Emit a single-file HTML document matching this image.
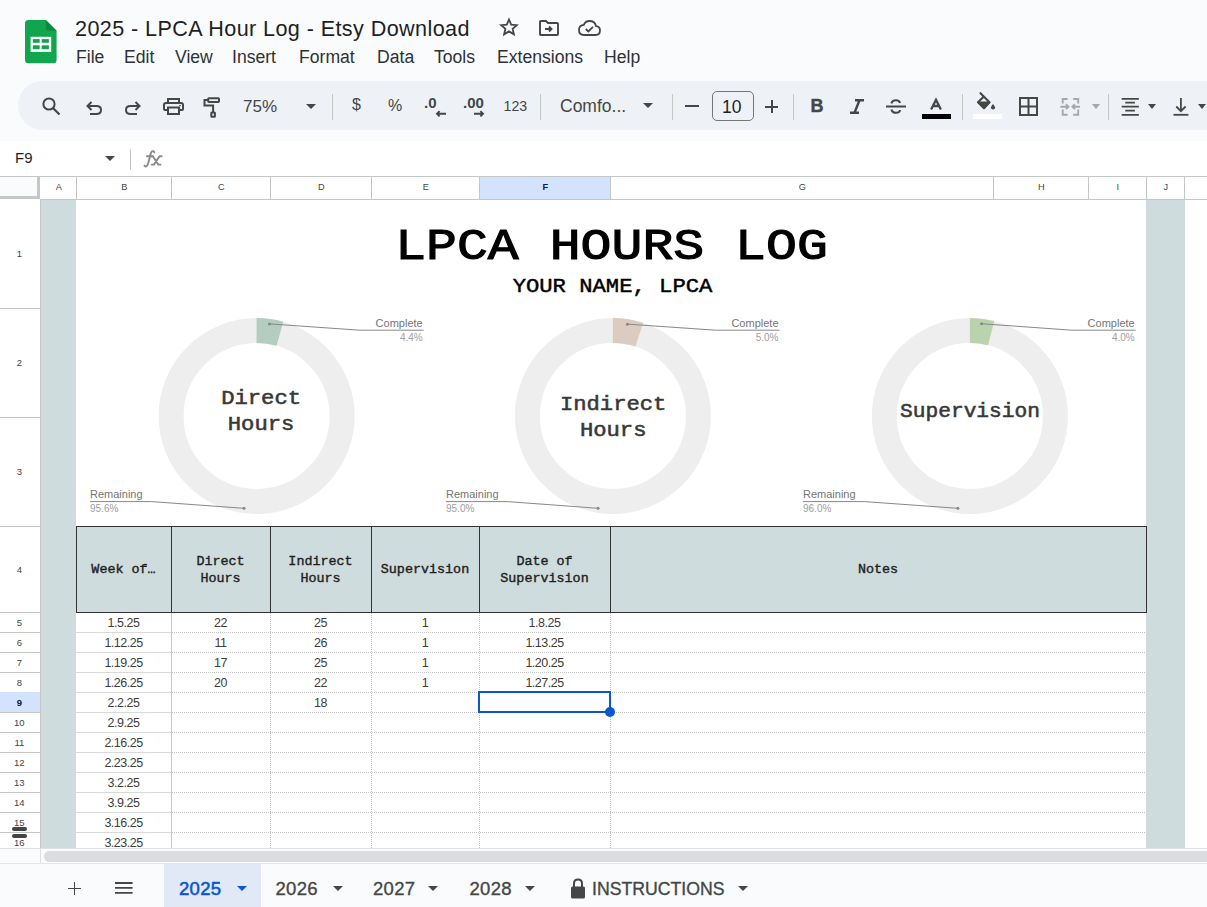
<!DOCTYPE html>
<html><head><meta charset="utf-8">
<style>
*{margin:0;padding:0;box-sizing:border-box}
html,body{width:1207px;height:907px;overflow:hidden;background:#f9fbfd;font-family:"Liberation Sans",sans-serif;color:#1f1f1f;position:relative}
.a{position:absolute}
.t{position:absolute;white-space:nowrap;line-height:1}
.m{font-family:"Liberation Mono",monospace}
svg{position:absolute;overflow:visible}
.menu{font-size:17.6px;color:#303134;top:49px}
.sep{position:absolute;width:1px;background:#c7c7c7}
.tri{position:absolute;width:0;height:0;border-left:5px solid transparent;border-right:5px solid transparent;border-top:5px solid #444746}
.ch{position:absolute;top:183px;margin-left:0.8px;font-size:9.2px;color:#444;text-align:center;line-height:1}
.rh{position:absolute;left:-0.7px;width:40px;font-size:9.5px;color:#444;text-align:center;line-height:1}
.d{position:absolute;font-size:12.5px;color:#3d3d3d;text-align:center;line-height:1;letter-spacing:-0.5px}
.lbl{position:absolute;font-size:11px;color:#757575;line-height:1;white-space:nowrap}
.pct{position:absolute;font-size:10px;color:#9e9e9e;line-height:1;white-space:nowrap}
.th{position:absolute;font-family:"Liberation Mono",monospace;font-weight:normal;-webkit-text-stroke:0.4px #1f1f1f;font-size:13.4px;color:#1f1f1f;line-height:17px;text-align:center;white-space:nowrap}
</style></head><body>

<svg style="left:25px;top:19.7px" width="31.6" height="43.3" viewBox="0 0 31.6 43.3">
  <path d="M3.5 0H20.8L31.6 10.8V39.8Q31.6 43.3 28.1 43.3H3.5Q0 43.3 0 39.8V3.5Q0 0 3.5 0Z" fill="#12a54f"/>
  <path d="M20.8 0L31.6 10.8H23.8Q20.8 10.8 20.8 7.8Z" fill="#0c8a3c"/>
  <rect x="5.6" y="16.8" width="20.6" height="15.1" fill="#fff"/>
  <rect x="7.8" y="19.1" width="6.9" height="3.7" fill="#12a54f"/>
  <rect x="16.7" y="19.1" width="7.2" height="3.7" fill="#12a54f"/>
  <rect x="7.8" y="25.3" width="6.9" height="3.9" fill="#12a54f"/>
  <rect x="16.7" y="25.3" width="7.2" height="3.9" fill="#12a54f"/>
</svg>
<div class="t" id="title" style="left:75px;top:18px;font-size:21.6px;letter-spacing:0.4px;color:#1f1f1f">2025 - LPCA Hour Log - Etsy Download</div>

<div class="t menu" style="left:76px">File</div>
<div class="t menu" style="left:124px">Edit</div>
<div class="t menu" style="left:175px">View</div>
<div class="t menu" style="left:232px">Insert</div>
<div class="t menu" style="left:299px">Format</div>
<div class="t menu" style="left:377px">Data</div>
<div class="t menu" style="left:434px">Tools</div>
<div class="t menu" style="left:497px">Extensions</div>
<div class="t menu" style="left:604px">Help</div>
<svg style="left:499px;top:18px" width="20" height="18" viewBox="0 0 20 18"><path d="M10 1.5L12.2 6.6L17.8 7.1L13.6 10.8L14.9 16.3L10 13.4L5.1 16.3L6.4 10.8L2.2 7.1L7.8 6.6Z" fill="none" stroke="#444746" stroke-width="1.8" stroke-linejoin="miter"/></svg>
<svg style="left:539px;top:20px" width="20" height="16" viewBox="0 0 20 16"><path d="M1 2Q1 1 2 1H7L9 3H18Q19 3 19 4V14Q19 15 18 15H2Q1 15 1 14Z" fill="none" stroke="#444746" stroke-width="1.9"/><path d="M6 9H12M10 6.5L12.5 9L10 11.5" fill="none" stroke="#444746" stroke-width="1.9"/></svg>
<svg style="left:578px;top:20px" width="23" height="16" viewBox="0 0 23 16"><path d="M6 15H17.5Q22 15 22 10.5Q22 6.5 18 6.2Q17 1 11.5 1Q7.5 1 5.8 4.8Q1 5.3 1 10Q1 15 6 15Z" fill="none" stroke="#444746" stroke-width="1.8"/><path d="M7.8 9L10.3 11.5L15 6.8" fill="none" stroke="#444746" stroke-width="1.8"/></svg>

<div class="a" style="left:18px;top:81px;width:1250px;height:49px;border-radius:25px;background:#eef1f6"></div>
<svg style="left:42px;top:97px" width="19" height="19" viewBox="0 0 19 19"><circle cx="7" cy="7" r="5.6" fill="none" stroke="#444746" stroke-width="2"/><path d="M11 11L17.5 17.5" stroke="#444746" stroke-width="2.2"/></svg>
<svg style="left:86px;top:101px" width="16" height="14" viewBox="0 0 16 14"><path d="M2 5H10.5Q15 5 15 9Q15 13 10.5 13H4" fill="none" stroke="#444746" stroke-width="2"/><path d="M5.5 1L1.5 5L5.5 9" fill="none" stroke="#444746" stroke-width="2"/></svg>
<svg style="left:125px;top:101px" width="16" height="14" viewBox="0 0 16 14"><path d="M14 5H5.5Q1 5 1 9Q1 13 5.5 13H12" fill="none" stroke="#444746" stroke-width="2"/><path d="M10.5 1L14.5 5L10.5 9" fill="none" stroke="#444746" stroke-width="2"/></svg>
<svg style="left:163px;top:98px" width="21" height="17" viewBox="0 0 21 17"><path d="M5 5V1H16V5" fill="none" stroke="#444746" stroke-width="2"/><path d="M5 12H2Q1 12 1 11V7Q1 5 3 5H18Q20 5 20 7V11Q20 12 19 12H16" fill="none" stroke="#444746" stroke-width="2"/><rect x="5" y="9.5" width="11" height="6.5" fill="none" stroke="#444746" stroke-width="2"/><circle cx="17" cy="7.6" r="0.8" fill="#444746"/></svg>
<svg style="left:200px;top:95px" width="24" height="24" viewBox="0 0 24 24"><g fill="none" stroke="#444746" stroke-width="2"><rect x="8.2" y="3.3" width="10.8" height="3.6" rx="0.6"/><path d="M8.2 5.1H4.5V10.5H13.1V17.4"/><rect x="11.3" y="17.4" width="3.6" height="4.3" rx="0.5"/></g></svg>
<div class="t" style="left:243px;top:98px;font-size:17px;color:#444746">75%</div>
<div class="tri" style="left:306px;top:104px"></div>
<div class="sep" style="left:332px;top:94px;height:26px"></div>
<div class="t" style="left:352px;top:97px;font-size:16px;color:#444746">$</div>
<div class="t" style="left:388px;top:98px;font-size:16px;color:#444746">%</div>
<div class="t" style="left:424px;top:95px;font-size:15px;font-weight:bold;color:#444746">.0</div>
<svg style="left:435px;top:110px" width="12" height="8" viewBox="0 0 12 8"><path d="M11 3.7H2M4.6 1.1L2 3.7L4.6 6.3" fill="none" stroke="#444746" stroke-width="1.9"/></svg>
<div class="t" style="left:463px;top:95px;font-size:15px;font-weight:bold;color:#444746">.00</div>
<svg style="left:473px;top:110px" width="12" height="8" viewBox="0 0 12 8"><path d="M1 3.7H10M7.4 1.1L10 3.7L7.4 6.3" fill="none" stroke="#444746" stroke-width="1.9"/></svg>
<div class="t" style="left:503.5px;top:99px;font-size:14.2px;color:#444746">123</div>
<div class="sep" style="left:540px;top:94px;height:26px"></div>
<div class="t" style="left:560px;top:98px;font-size:17.5px;color:#444746">Comfo...</div>
<div class="tri" style="left:643px;top:103px"></div>
<div class="sep" style="left:672px;top:94px;height:26px"></div>
<div class="a" style="left:685px;top:105px;width:14px;height:2px;background:#444746"></div>
<div class="a" style="left:712px;top:91px;width:42px;height:30px;border:1px solid #747775;border-radius:5px"></div>
<div class="t" style="left:722px;top:98.5px;font-size:17.5px;color:#1f1f1f">10</div>
<div class="a" style="left:765px;top:105.5px;width:13px;height:2px;background:#444746"></div>
<div class="a" style="left:770.5px;top:100px;width:2px;height:13px;background:#444746"></div>
<div class="sep" style="left:793px;top:94px;height:26px"></div>
<div class="t" style="left:810.5px;top:97px;font-size:18px;font-weight:bold;color:#444746;-webkit-text-stroke:0.4px #444746">B</div>
<svg style="left:849px;top:99px" width="16" height="15" viewBox="0 0 16 15"><path d="M6 1.2H15M1 13.8H10M10.5 1.2L5.5 13.8" fill="none" stroke="#444746" stroke-width="2.4"/></svg>
<svg style="left:886px;top:99px" width="20" height="15" viewBox="0 0 20 15"><path d="M0 7.5H20" stroke="#444746" stroke-width="2"/><path d="M5.5 4.5Q6 1.2 10 1.2Q13.5 1.2 14 4" fill="none" stroke="#444746" stroke-width="2"/><path d="M5.5 10.5Q6 13.8 10 13.8Q13.8 13.8 14 11" fill="none" stroke="#444746" stroke-width="2"/></svg>
<svg style="left:930px;top:99px" width="12" height="10.5" viewBox="0 0 12 10.5"><path d="M1.1 10.4L6 0.8L10.9 10.4M2.9 7H9.1" fill="none" stroke="#444746" stroke-width="2.3"/></svg>
<div class="a" style="left:922px;top:114px;width:29px;height:5px;background:#000"></div>
<div class="sep" style="left:962px;top:94px;height:26px"></div>
<svg style="left:970px;top:88px" width="35" height="34" viewBox="0 0 35 34"><path d="M10.5 5.2L19.5 14.2" stroke="#444746" stroke-width="2.1" stroke-linecap="round"/><path d="M13.9 8.6L8 14.2L14 20.2L19.5 14.2" fill="none" stroke="#444746" stroke-width="2.1" stroke-linejoin="round"/><path d="M8 14.2H19.5L14 20.2Z" fill="#444746" stroke="#444746" stroke-width="1.5" stroke-linejoin="round"/><path d="M23 16Q25.1 18.6 25.1 19.4A2.1 2.1 0 0 1 20.9 19.4Q20.9 18.6 23 16Z" fill="#444746"/></svg>
<div class="a" style="left:973px;top:114px;width:28.5px;height:4.8px;background:#fff"></div>
<svg style="left:1019px;top:97px" width="19" height="19" viewBox="0 0 19 19"><rect x="1" y="1" width="17" height="17" fill="none" stroke="#444746" stroke-width="2"/><path d="M9.5 1V18M1 9.5H18" stroke="#444746" stroke-width="2"/></svg>
<svg style="left:1055px;top:92px" width="30" height="30" viewBox="0 0 30 30"><g fill="none" stroke="#a4a7ab" stroke-width="1.9"><path d="M12.6 7H7.7V11.6M7.7 17.4V22.8H12.6M18.2 7H23.2V11.6M23.2 17.4V22.8H18.2"/><path d="M5.4 14.7H13.2M10.9 12.3L13.4 14.7L10.9 17.1M25 14.7H17.6M19.9 12.3L17.4 14.7L19.9 17.1"/></g></svg>
<div class="tri" style="left:1091.5px;top:104px;border-left-width:4.75px;border-right-width:4.75px;border-top-color:#a4a7ab"></div>
<div class="sep" style="left:1108px;top:94px;height:26px"></div>
<svg style="left:1120px;top:96px" width="20" height="20" viewBox="0 0 20 20"><path d="M1.7 2.8H18.8M5.3 6.7H14.9M1.7 10.7H18.8M5.3 14.7H14.9M1.7 18.8H18.8" stroke="#444746" stroke-width="1.8"/></svg>
<div class="tri" style="left:1147.5px;top:104px;border-left-width:4.7px;border-right-width:4.7px"></div>
<svg style="left:1170px;top:96px" width="20" height="20" viewBox="0 0 20 20"><path d="M10.9 2V15M6.3 10.5L10.9 15.2L15.6 10.5" fill="none" stroke="#444746" stroke-width="1.8"/><path d="M3.5 18.8H18.4" stroke="#444746" stroke-width="1.8"/></svg>
<div class="tri" style="left:1198.4px;top:103.8px;border-left-width:4.7px;border-right-width:4.7px"></div>
<div class="a" style="left:0;top:141px;width:1207px;height:35px;background:#fff"></div>
<div class="t" style="left:15px;top:150px;font-size:15px;color:#1f1f1f">F9</div>
<div class="tri" style="left:105px;top:156px"></div>
<div class="sep" style="left:130px;top:149px;height:21px"></div>
<svg style="left:138px;top:146px" width="30" height="26" viewBox="0 0 30 26"><g fill="none" stroke="#8a8a8a" stroke-width="1.9" stroke-linecap="round"><path d="M6.5 19.8Q7.8 21.6 9.3 19.5Q10.2 18 11.8 11Q13 5.5 14.4 5.2Q16 4.8 16.3 6.4"/><path d="M9 10.3H14"/><path d="M13.2 10.3H14.8L20.3 18.6H22.5M23.6 10.3H21.6L16 18.6H13.6"/></g></svg>
<div class="a" style="left:0;top:176px;width:1207px;height:672px;background:#fff"></div>
<div class="a" style="left:40px;top:176px;width:479px;height:23px;background:#fff"></div>
<div class="a" style="left:479px;top:176px;width:131px;height:23px;background:#d3e3fd"></div>
<div class="ch" style="left:40px;width:36px">A</div>
<div class="a" style="left:76px;top:176px;width:1px;height:23px;background:#c4c7c5"></div>
<div class="ch" style="left:76px;width:95px">B</div>
<div class="a" style="left:171px;top:176px;width:1px;height:23px;background:#c4c7c5"></div>
<div class="ch" style="left:171px;width:99px">C</div>
<div class="a" style="left:270px;top:176px;width:1px;height:23px;background:#c4c7c5"></div>
<div class="ch" style="left:270px;width:101px">D</div>
<div class="a" style="left:371px;top:176px;width:1px;height:23px;background:#c4c7c5"></div>
<div class="ch" style="left:371px;width:108px">E</div>
<div class="a" style="left:479px;top:176px;width:1px;height:23px;background:#c4c7c5"></div>
<div class="ch" style="left:479px;width:131px;font-weight:bold;color:#041e49">F</div>
<div class="a" style="left:610px;top:176px;width:1px;height:23px;background:#c4c7c5"></div>
<div class="ch" style="left:610px;width:383px">G</div>
<div class="a" style="left:993px;top:176px;width:1px;height:23px;background:#c4c7c5"></div>
<div class="ch" style="left:993px;width:95px">H</div>
<div class="a" style="left:1088px;top:176px;width:1px;height:23px;background:#c4c7c5"></div>
<div class="ch" style="left:1088px;width:58px">I</div>
<div class="a" style="left:1146px;top:176px;width:1px;height:23px;background:#c4c7c5"></div>
<div class="ch" style="left:1146px;width:38px">J</div>
<div class="a" style="left:1184px;top:176px;width:1px;height:23px;background:#c4c7c5"></div>
<div class="a" style="left:0;top:176px;width:1207px;height:1px;background:#c4c7c5"></div>
<div class="a" style="left:40px;top:199px;width:1167px;height:1px;background:#c4c7c5"></div>
<div class="a" style="left:0;top:177px;width:40px;height:22px;background:#f9fbfd"></div>
<div class="a" style="left:37px;top:176px;width:3px;height:23px;background:#c4c7c5"></div>
<div class="a" style="left:0;top:196px;width:40px;height:3px;background:#c4c7c5"></div>
<div class="rh" style="top:249.0px;height:9px">1</div>
<div class="a" style="left:0;top:308px;width:40px;height:1px;background:#c4c7c5"></div>
<div class="rh" style="top:358.0px;height:9px">2</div>
<div class="a" style="left:0;top:417px;width:40px;height:1px;background:#c4c7c5"></div>
<div class="rh" style="top:467.0px;height:9px">3</div>
<div class="a" style="left:0;top:526px;width:40px;height:1px;background:#c4c7c5"></div>
<div class="rh" style="top:564.5px;height:9px">4</div>
<div class="a" style="left:0;top:612px;width:40px;height:1px;background:#c4c7c5"></div>
<div class="rh" style="top:617.5px;height:9px">5</div>
<div class="a" style="left:0;top:632px;width:40px;height:1px;background:#c4c7c5"></div>
<div class="rh" style="top:637.5px;height:9px">6</div>
<div class="a" style="left:0;top:652px;width:40px;height:1px;background:#c4c7c5"></div>
<div class="rh" style="top:657.5px;height:9px">7</div>
<div class="a" style="left:0;top:672px;width:40px;height:1px;background:#c4c7c5"></div>
<div class="rh" style="top:677.5px;height:9px">8</div>
<div class="a" style="left:0;top:692px;width:40px;height:1px;background:#c4c7c5"></div>
<div class="a" style="left:0;top:692px;width:40px;height:20px;background:#d3e3fd"></div>
<div class="rh" style="top:697.5px;height:9px;font-weight:bold;color:#041e49">9</div>
<div class="a" style="left:0;top:712px;width:40px;height:1px;background:#c4c7c5"></div>
<div class="rh" style="top:717.5px;height:9px">10</div>
<div class="a" style="left:0;top:732px;width:40px;height:1px;background:#c4c7c5"></div>
<div class="rh" style="top:737.5px;height:9px">11</div>
<div class="a" style="left:0;top:752px;width:40px;height:1px;background:#c4c7c5"></div>
<div class="rh" style="top:757.5px;height:9px">12</div>
<div class="a" style="left:0;top:772px;width:40px;height:1px;background:#c4c7c5"></div>
<div class="rh" style="top:777.5px;height:9px">13</div>
<div class="a" style="left:0;top:792px;width:40px;height:1px;background:#c4c7c5"></div>
<div class="rh" style="top:797.5px;height:9px">14</div>
<div class="a" style="left:0;top:812px;width:40px;height:1px;background:#c4c7c5"></div>
<div class="rh" style="top:817.5px;height:9px">15</div>
<div class="a" style="left:0;top:832px;width:40px;height:1px;background:#c4c7c5"></div>
<div class="rh" style="top:837.5px;height:9px">16</div>
<div class="a" style="left:40px;top:199px;width:1px;height:649px;background:#c4c7c5"></div>
<div class="a" style="left:41px;top:200px;width:35px;height:648px;background:#cfdcdd"></div>
<div class="a" style="left:1146px;top:200px;width:39px;height:648px;background:#cfdcdd"></div>
<div class="t m" style="left:76.5px;width:1070px;text-align:center;top:219.55px;font-size:51.5px;font-weight:normal;color:#000;transform-origin:50% 39.45px;transform:scale(1,0.87);-webkit-text-stroke:1.3px #000">LPCA HOURS LOG</div>
<div class="t m" style="left:77.5px;width:1070px;text-align:center;top:275.79px;font-size:22.2px;font-weight:normal;color:#000;transform-origin:50% 17.01px;transform:scale(1,0.87);-webkit-text-stroke:0.5px #000">YOUR NAME, LPCA</div>
<svg style="left:0;top:0" width="1207" height="907"><circle cx="256.6" cy="416" r="85.5" fill="none" stroke="#eeeeee" stroke-width="25"/><path d="M256.6 318 A98 98 0 0 1 283.35 321.72 L276.53 345.77 A73 73 0 0 0 256.6 343 Z" fill="#b3cdc1"/><circle cx="269.41" cy="323.89" r="1.5" fill="#888"/><path d="M269.41 323.89 L359.7 330.2 H423.7" fill="none" stroke="#888" stroke-width="1"/><circle cx="244.00" cy="508.30" r="1.5" fill="#888"/><path d="M244.00 508.30 L151.5 501.6 H90" fill="none" stroke="#888" stroke-width="1"/></svg>
<div class="lbl" style="left:322.7px;width:100px;text-align:right;top:317.5px">Complete</div>
<div class="pct" style="left:322.7px;width:100px;text-align:right;top:332.5px">4.4%</div>
<div class="lbl" style="left:90px;top:488.5px">Remaining</div>
<div class="pct" style="left:90px;top:503.5px">95.6%</div>
<div class="t m" style="left:161.1px;width:200px;text-align:center;top:387.74px;font-size:22.2px;font-weight:normal;color:#383838;transform-origin:50% 17.01px;transform:scale(1,0.87);-webkit-text-stroke:0.6px #383838">Direct</div>
<div class="t m" style="left:161.1px;width:200px;text-align:center;top:414.44px;font-size:22.2px;font-weight:normal;color:#383838;transform-origin:50% 17.01px;transform:scale(1,0.87);-webkit-text-stroke:0.6px #383838">Hours</div>
<svg style="left:0;top:0" width="1207" height="907"><circle cx="612.9" cy="416" r="85.5" fill="none" stroke="#eeeeee" stroke-width="25"/><path d="M612.9 318 A98 98 0 0 1 643.18 322.80 L635.46 346.57 A73 73 0 0 0 612.9 343 Z" fill="#dccbc0"/><circle cx="627.45" cy="324.14" r="1.5" fill="#888"/><path d="M627.45 324.14 L715.5 330.2 H779.5" fill="none" stroke="#888" stroke-width="1"/><circle cx="598.10" cy="508.30" r="1.5" fill="#888"/><path d="M598.10 508.30 L507.5 501.6 H446" fill="none" stroke="#888" stroke-width="1"/></svg>
<div class="lbl" style="left:678.5px;width:100px;text-align:right;top:317.5px">Complete</div>
<div class="pct" style="left:678.5px;width:100px;text-align:right;top:332.5px">5.0%</div>
<div class="lbl" style="left:446px;top:488.5px">Remaining</div>
<div class="pct" style="left:446px;top:503.5px">95.0%</div>
<div class="t m" style="left:513.2px;width:200px;text-align:center;top:393.54px;font-size:22.2px;font-weight:normal;color:#383838;transform-origin:50% 17.01px;transform:scale(1,0.87);-webkit-text-stroke:0.6px #383838">Indirect</div>
<div class="t m" style="left:513.2px;width:200px;text-align:center;top:420.24px;font-size:22.2px;font-weight:normal;color:#383838;transform-origin:50% 17.01px;transform:scale(1,0.87);-webkit-text-stroke:0.6px #383838">Hours</div>
<svg style="left:0;top:0" width="1207" height="907"><circle cx="969.9" cy="416" r="85.5" fill="none" stroke="#eeeeee" stroke-width="25"/><path d="M969.9 318 A98 98 0 0 1 994.27 321.08 L988.05 345.29 A73 73 0 0 0 969.9 343 Z" fill="#b9d3ae"/><circle cx="981.56" cy="323.73" r="1.5" fill="#888"/><path d="M981.56 323.73 L1071.7 330.2 H1135.7" fill="none" stroke="#888" stroke-width="1"/><circle cx="957.90" cy="508.30" r="1.5" fill="#888"/><path d="M957.90 508.30 L864.5 501.6 H803" fill="none" stroke="#888" stroke-width="1"/></svg>
<div class="lbl" style="left:1034.7px;width:100px;text-align:right;top:317.5px">Complete</div>
<div class="pct" style="left:1034.7px;width:100px;text-align:right;top:332.5px">4.0%</div>
<div class="lbl" style="left:803px;top:488.5px">Remaining</div>
<div class="pct" style="left:803px;top:503.5px">96.0%</div>
<div class="t m" style="left:869.9px;width:200px;text-align:center;top:400.59px;font-size:22.2px;font-weight:normal;color:#383838;transform-origin:50% 17.01px;transform:scale(0.955,0.87);-webkit-text-stroke:0.6px #383838">Supervision</div>
<div class="a" style="left:76px;top:526px;width:1071px;height:87px;background:#cfdcdd;border:1px solid #333"></div>
<div class="a" style="left:171px;top:526px;width:1px;height:87px;background:#333"></div>
<div class="a" style="left:270px;top:526px;width:1px;height:87px;background:#333"></div>
<div class="a" style="left:371px;top:526px;width:1px;height:87px;background:#333"></div>
<div class="a" style="left:479px;top:526px;width:1px;height:87px;background:#333"></div>
<div class="a" style="left:610px;top:526px;width:1px;height:87px;background:#333"></div>
<div class="th" style="left:76px;width:95px;top:561.0px">Week of…</div>
<div class="th" style="left:171px;width:99px;top:552.5px">Direct<br>Hours</div>
<div class="th" style="left:270px;width:101px;top:552.5px">Indirect<br>Hours</div>
<div class="th" style="left:371px;width:108px;top:561.0px">Supervision</div>
<div class="th" style="left:479px;width:131px;top:552.5px">Date of<br>Supervision</div>
<div class="th" style="left:610px;width:536px;top:561.0px">Notes</div>
<div class="a" style="left:76px;top:632px;width:95px;height:1px;background:#d9d9d9"></div>
<div class="a" style="left:172px;top:632px;width:974px;height:1px;background:repeating-linear-gradient(90deg,#c4c4c4 0 1px,transparent 1px 2px)"></div>
<div class="a" style="left:76px;top:652px;width:95px;height:1px;background:#d9d9d9"></div>
<div class="a" style="left:172px;top:652px;width:974px;height:1px;background:repeating-linear-gradient(90deg,#c4c4c4 0 1px,transparent 1px 2px)"></div>
<div class="a" style="left:76px;top:672px;width:95px;height:1px;background:#d9d9d9"></div>
<div class="a" style="left:172px;top:672px;width:974px;height:1px;background:repeating-linear-gradient(90deg,#c4c4c4 0 1px,transparent 1px 2px)"></div>
<div class="a" style="left:76px;top:692px;width:95px;height:1px;background:#d9d9d9"></div>
<div class="a" style="left:172px;top:692px;width:974px;height:1px;background:repeating-linear-gradient(90deg,#c4c4c4 0 1px,transparent 1px 2px)"></div>
<div class="a" style="left:76px;top:712px;width:95px;height:1px;background:#d9d9d9"></div>
<div class="a" style="left:172px;top:712px;width:974px;height:1px;background:repeating-linear-gradient(90deg,#c4c4c4 0 1px,transparent 1px 2px)"></div>
<div class="a" style="left:76px;top:732px;width:95px;height:1px;background:#d9d9d9"></div>
<div class="a" style="left:172px;top:732px;width:974px;height:1px;background:repeating-linear-gradient(90deg,#c4c4c4 0 1px,transparent 1px 2px)"></div>
<div class="a" style="left:76px;top:752px;width:95px;height:1px;background:#d9d9d9"></div>
<div class="a" style="left:172px;top:752px;width:974px;height:1px;background:repeating-linear-gradient(90deg,#c4c4c4 0 1px,transparent 1px 2px)"></div>
<div class="a" style="left:76px;top:772px;width:95px;height:1px;background:#d9d9d9"></div>
<div class="a" style="left:172px;top:772px;width:974px;height:1px;background:repeating-linear-gradient(90deg,#c4c4c4 0 1px,transparent 1px 2px)"></div>
<div class="a" style="left:76px;top:792px;width:95px;height:1px;background:#d9d9d9"></div>
<div class="a" style="left:172px;top:792px;width:974px;height:1px;background:repeating-linear-gradient(90deg,#c4c4c4 0 1px,transparent 1px 2px)"></div>
<div class="a" style="left:76px;top:812px;width:95px;height:1px;background:#d9d9d9"></div>
<div class="a" style="left:172px;top:812px;width:974px;height:1px;background:repeating-linear-gradient(90deg,#c4c4c4 0 1px,transparent 1px 2px)"></div>
<div class="a" style="left:76px;top:832px;width:95px;height:1px;background:#d9d9d9"></div>
<div class="a" style="left:172px;top:832px;width:974px;height:1px;background:repeating-linear-gradient(90deg,#c4c4c4 0 1px,transparent 1px 2px)"></div>
<div class="a" style="left:171px;top:613px;width:1px;height:235px;background:#c8c8c8"></div>
<div class="a" style="left:270px;top:613px;width:1px;height:235px;background:repeating-linear-gradient(180deg,#c4c4c4 0 1px,transparent 1px 2px)"></div>
<div class="a" style="left:371px;top:613px;width:1px;height:235px;background:repeating-linear-gradient(180deg,#c4c4c4 0 1px,transparent 1px 2px)"></div>
<div class="a" style="left:479px;top:613px;width:1px;height:235px;background:repeating-linear-gradient(180deg,#c4c4c4 0 1px,transparent 1px 2px)"></div>
<div class="a" style="left:610px;top:613px;width:1px;height:235px;background:repeating-linear-gradient(180deg,#c4c4c4 0 1px,transparent 1px 2px)"></div>
<div class="d" style="left:76px;width:95px;top:617px">1.5.25</div>
<div class="d" style="left:171px;width:99px;top:617px">22</div>
<div class="d" style="left:270px;width:101px;top:617px">25</div>
<div class="d" style="left:371px;width:108px;top:617px">1</div>
<div class="d" style="left:479px;width:131px;top:617px">1.8.25</div>
<div class="d" style="left:76px;width:95px;top:637px">1.12.25</div>
<div class="d" style="left:171px;width:99px;top:637px">11</div>
<div class="d" style="left:270px;width:101px;top:637px">26</div>
<div class="d" style="left:371px;width:108px;top:637px">1</div>
<div class="d" style="left:479px;width:131px;top:637px">1.13.25</div>
<div class="d" style="left:76px;width:95px;top:657px">1.19.25</div>
<div class="d" style="left:171px;width:99px;top:657px">17</div>
<div class="d" style="left:270px;width:101px;top:657px">25</div>
<div class="d" style="left:371px;width:108px;top:657px">1</div>
<div class="d" style="left:479px;width:131px;top:657px">1.20.25</div>
<div class="d" style="left:76px;width:95px;top:677px">1.26.25</div>
<div class="d" style="left:171px;width:99px;top:677px">20</div>
<div class="d" style="left:270px;width:101px;top:677px">22</div>
<div class="d" style="left:371px;width:108px;top:677px">1</div>
<div class="d" style="left:479px;width:131px;top:677px">1.27.25</div>
<div class="d" style="left:76px;width:95px;top:697px">2.2.25</div>
<div class="d" style="left:270px;width:101px;top:697px">18</div>
<div class="d" style="left:76px;width:95px;top:717px">2.9.25</div>
<div class="d" style="left:76px;width:95px;top:737px">2.16.25</div>
<div class="d" style="left:76px;width:95px;top:757px">2.23.25</div>
<div class="d" style="left:76px;width:95px;top:777px">3.2.25</div>
<div class="d" style="left:76px;width:95px;top:797px">3.9.25</div>
<div class="d" style="left:76px;width:95px;top:817px">3.16.25</div>
<div class="d" style="left:76px;width:95px;top:837px">3.23.25</div>
<div class="a" style="left:478px;top:691px;width:133px;height:22px;border:2px solid #0b57d0"></div>
<div class="a" style="left:605px;top:707px;width:10px;height:10px;border-radius:50%;background:#0b57d0"></div>
<div class="a" style="left:12px;top:827px;width:15px;height:3.5px;border-radius:2px;background:#444"></div>
<div class="a" style="left:12px;top:834px;width:15px;height:3.5px;border-radius:2px;background:#444"></div>
<div class="a" style="left:0;top:848px;width:1207px;height:16px;background:#f9fbfd;border-top:1px solid #e0e0e0"></div>
<div class="a" style="left:40px;top:848px;width:1px;height:16px;background:#e0e0e0"></div>
<div class="a" style="left:43.5px;top:850.5px;width:1200px;height:11px;border-radius:6px;background:#dadce0"></div>
<div class="a" style="left:0;top:863px;width:1207px;height:1px;background:#e6e6e6"></div>
<div class="a" style="left:0;top:864px;width:1207px;height:43px;background:#f9fbfd"></div>
<div class="a" style="left:68px;top:887.5px;width:13px;height:1.8px;background:#444746"></div>
<div class="a" style="left:73.6px;top:882px;width:1.8px;height:12.5px;background:#444746"></div>
<svg style="left:115px;top:882px" width="18" height="12" viewBox="0 0 18 12"><path d="M0 1H17.6M0 5.9H17.6M0 10.9H17.6" stroke="#444746" stroke-width="1.8"/></svg>
<div class="a" style="left:164px;top:864px;width:97px;height:43px;background:#e1e9f7"></div>
<div class="t" style="left:179px;top:880px;font-size:18.5px;font-weight:normal;color:#0b57d0;letter-spacing:0.3px;-webkit-text-stroke:0.55px #0b57d0">2025</div>
<div class="tri" style="left:236.5px;top:886px;border-top-color:#0b57d0"></div>
<div class="t" style="left:275.5px;top:880px;font-size:18.5px;font-weight:normal;color:#444746;letter-spacing:0.3px;-webkit-text-stroke:0.35px #444746">2026</div>
<div class="tri" style="left:332.7px;top:886px;border-top-color:#444746"></div>
<div class="t" style="left:373px;top:880px;font-size:18.5px;font-weight:normal;color:#444746;letter-spacing:0.3px;-webkit-text-stroke:0.35px #444746">2027</div>
<div class="tri" style="left:428.4px;top:886px;border-top-color:#444746"></div>
<div class="t" style="left:469.5px;top:880px;font-size:18.5px;font-weight:normal;color:#444746;letter-spacing:0.3px;-webkit-text-stroke:0.35px #444746">2028</div>
<div class="tri" style="left:525px;top:886px;border-top-color:#444746"></div>
<div class="t" style="left:591.5px;top:880px;font-size:18.5px;font-weight:normal;color:#444746;transform:scaleX(0.955);transform-origin:0 0;-webkit-text-stroke:0.35px #444746">INSTRUCTIONS</div>
<div class="tri" style="left:738px;top:886px;border-top-color:#444746"></div>
<svg style="left:570px;top:878px" width="16" height="21" viewBox="0 0 16 21"><path d="M4 9V5.5Q4 1.5 8 1.5Q12 1.5 12 5.5V9" fill="none" stroke="#444746" stroke-width="2"/><rect x="1" y="8.5" width="14" height="12" rx="1.5" fill="#444746"/></svg>
</body></html>
